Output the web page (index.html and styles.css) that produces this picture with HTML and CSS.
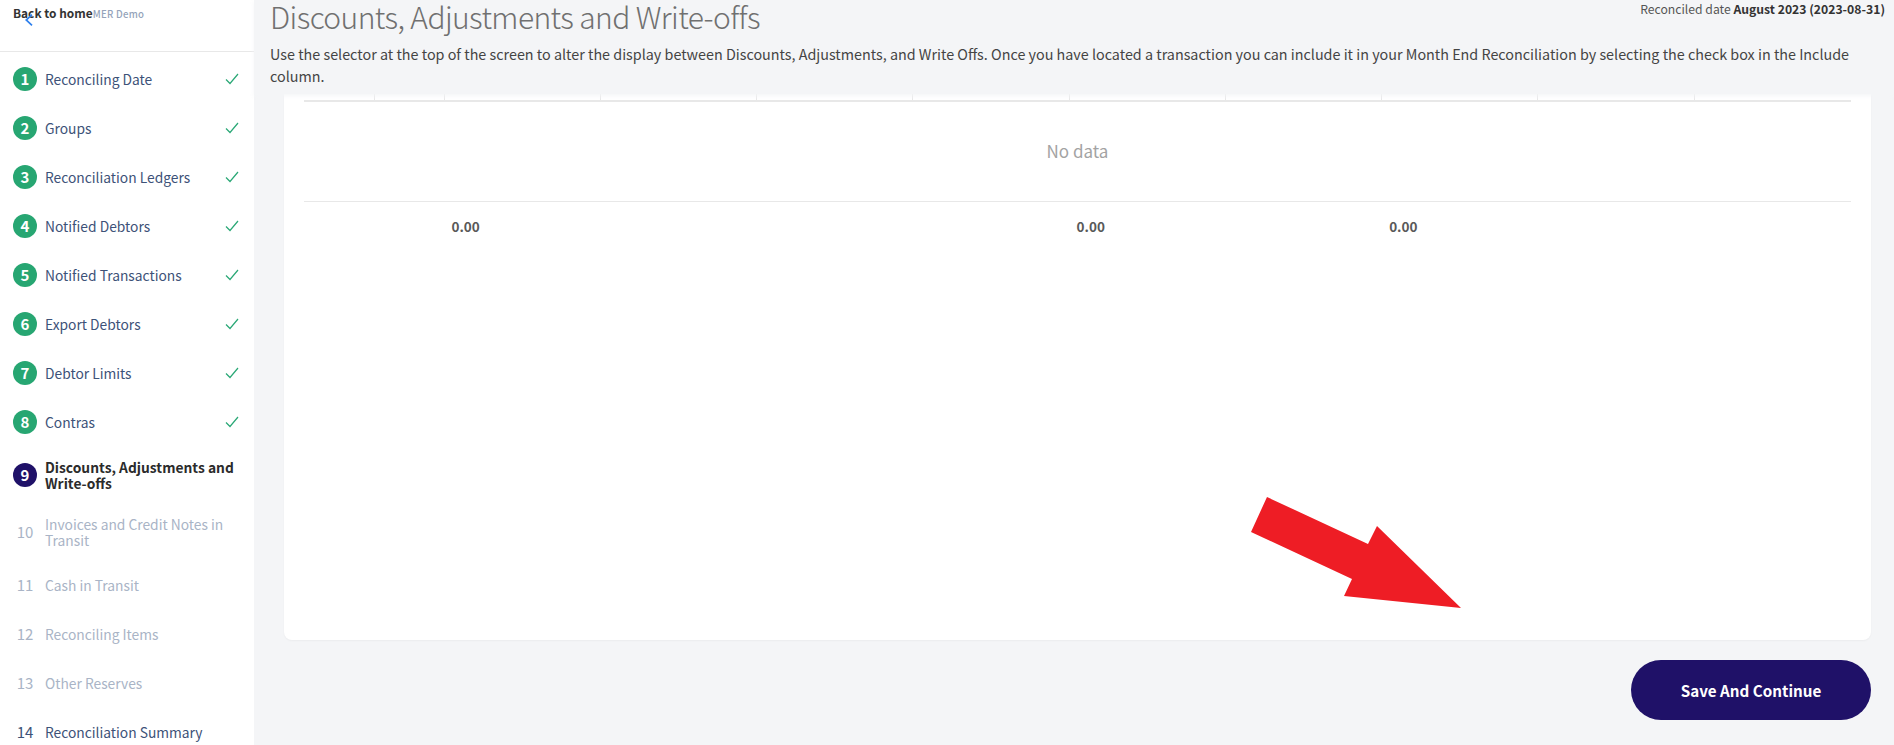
FILE: index.html
```html
<!DOCTYPE html>
<html lang="en">
<head>
  <meta charset="UTF-8">
  <title>Month End Reconciliation</title>
  <link rel="stylesheet" href="styles.css">
</head>
<body>
  <!-- Sidebar -->
  <div class="sidebar">
    <div class="sidebar-head">
      <svg class="back-icon" width="8" height="12" viewBox="0 0 8 12"><path d="M7 0.7 1.2 6 7 11.3" fill="none" stroke="#2f80ed" stroke-width="1.7"/></svg>
      <span class="back-link">Back to home</span><span class="demo-name">MER Demo</span>
    </div>
    <ul class="steps">
      <li class="step done"><span class="step-num">1</span><span class="step-label">Reconciling Date</span><svg class="step-check" width="14" height="12" viewBox="0 0 14 12"><path d="M1 6.5 5 10.5 13 1" fill="none" stroke="#2aa876" stroke-width="1.2"/></svg></li>
      <li class="step done"><span class="step-num">2</span><span class="step-label">Groups</span><svg class="step-check" width="14" height="12" viewBox="0 0 14 12"><path d="M1 6.5 5 10.5 13 1" fill="none" stroke="#2aa876" stroke-width="1.2"/></svg></li>
      <li class="step done"><span class="step-num">3</span><span class="step-label">Reconciliation Ledgers</span><svg class="step-check" width="14" height="12" viewBox="0 0 14 12"><path d="M1 6.5 5 10.5 13 1" fill="none" stroke="#2aa876" stroke-width="1.2"/></svg></li>
      <li class="step done"><span class="step-num">4</span><span class="step-label">Notified Debtors</span><svg class="step-check" width="14" height="12" viewBox="0 0 14 12"><path d="M1 6.5 5 10.5 13 1" fill="none" stroke="#2aa876" stroke-width="1.2"/></svg></li>
      <li class="step done"><span class="step-num">5</span><span class="step-label">Notified Transactions</span><svg class="step-check" width="14" height="12" viewBox="0 0 14 12"><path d="M1 6.5 5 10.5 13 1" fill="none" stroke="#2aa876" stroke-width="1.2"/></svg></li>
      <li class="step done"><span class="step-num">6</span><span class="step-label">Export Debtors</span><svg class="step-check" width="14" height="12" viewBox="0 0 14 12"><path d="M1 6.5 5 10.5 13 1" fill="none" stroke="#2aa876" stroke-width="1.2"/></svg></li>
      <li class="step done"><span class="step-num">7</span><span class="step-label">Debtor Limits</span><svg class="step-check" width="14" height="12" viewBox="0 0 14 12"><path d="M1 6.5 5 10.5 13 1" fill="none" stroke="#2aa876" stroke-width="1.2"/></svg></li>
      <li class="step done"><span class="step-num">8</span><span class="step-label">Contras</span><svg class="step-check" width="14" height="12" viewBox="0 0 14 12"><path d="M1 6.5 5 10.5 13 1" fill="none" stroke="#2aa876" stroke-width="1.2"/></svg></li>
      <li class="step current"><span class="step-num">9</span><span class="step-label">Discounts, Adjustments and Write-offs</span></li>
      <li class="step disabled"><span class="step-num">10</span><span class="step-label">Invoices and Credit Notes in Transit</span></li>
      <li class="step disabled"><span class="step-num">11</span><span class="step-label">Cash in Transit</span></li>
      <li class="step disabled"><span class="step-num">12</span><span class="step-label">Reconciling Items</span></li>
      <li class="step disabled"><span class="step-num">13</span><span class="step-label">Other Reserves</span></li>
      <li class="step"><span class="step-num">14</span><span class="step-label">Reconciliation Summary</span></li>
    </ul>
  </div>

  <!-- Main content -->
  <div class="main">
    <div class="page-head">
      <div class="title-row">
        <h1 class="page-title">Discounts, Adjustments and Write-offs</h1>
        <div class="rec-date">Reconciled date <b>August 2023 (2023-08-31)</b></div>
      </div>
      <p class="page-desc">Use the selector at the top of the screen to alter the display between Discounts, Adjustments, and Write Offs. Once you have located a transaction you can include it in your Month End Reconciliation by selecting the check box in the Include column.</p>
    </div>

    <div class="card">
      <div class="table-head">
        <span></span><span></span><span></span><span></span><span></span><span></span><span></span><span></span><span></span><span></span><span></span>
      </div>
      <div class="empty">No data</div>
      <div class="table-foot">
        <span></span><span></span><span>0.00</span><span></span><span></span><span></span><span>0.00</span><span></span><span>0.00</span><span></span><span></span>
      </div>
      <svg class="arrow" width="212" height="114" viewBox="0 0 212 114"><polygon points="17,1 118,48 127,30 211,112 94,100 102,83 1,36" fill="#ee1d25"/></svg>
    </div>

    <div class="actions">
      <button class="save-btn">Save And Continue</button>
    </div>
  </div>
</body>
</html>
```

FILE: styles.css
```css
/* Base reset */
* { margin: 0; padding: 0; box-sizing: border-box; }
body {
  display: flex; height: 745px; overflow: hidden;
  font-family: "Noto Sans CJK SC", "Noto Sans", sans-serif;
  background-color: #f4f5f7; color: #444;
}

/* Sidebar */
.sidebar { width: 254px; height: 745px; flex-shrink: 0; background-color: #fff; overflow: hidden; }
.sidebar-head {
  position: relative; height: 52px; padding: 3px 0 0 13px;
  border-bottom: 1px solid #e8e8e8; line-height: 16px;
}
.back-link { font-size: 11.9px; font-weight: 700; color: #333; }
.demo-name { font-size: 9.6px; font-weight: 500; color: #94a3ba; letter-spacing: 0.3px; }
.back-icon { position: absolute; left: 25px; top: 14px; }

.steps { list-style: none; padding-top: 2.5px; }
.step { display: flex; align-items: center; padding: 12.5px 15px 12.5px 13px; font-size: 13.8px; line-height: 16px; color: #3d5278; }
.step-num {
  width: 24px; height: 24px; flex-shrink: 0; margin-right: 8px;
  border-radius: 50%; text-align: center; line-height: 24px; font-size: 15px;
}
.step-label { flex-grow: 1; }
.step-check { flex-shrink: 0; }
.step.done .step-num { background-color: #27a672; color: #fff; font-weight: 700; }
.step.current .step-num { background-color: #1f1168; color: #fff; font-weight: 700; }
.step.current .step-label { font-weight: 700; color: #2b2b2b; }
.step.disabled { color: #a9b4c6; }

/* Page header */
.main { flex-grow: 1; min-width: 0; display: flex; flex-direction: column; }
.page-head {
  position: relative; height: 94px; padding-left: 16px; z-index: 1;
  background-color: #f4f5f7; box-shadow: 0 2px 4px rgba(244, 245, 247, 0.9);
}
.title-row { display: flex; justify-content: space-between; align-items: flex-start; height: 43px; padding-right: 9px; }
.page-title { font-size: 30px; font-weight: 300; line-height: 32px; letter-spacing: -0.6px; color: #707070; }
.rec-date { font-size: 12.2px; line-height: 18px; color: #555; }
.rec-date b { color: #333; }
.page-desc { font-size: 14.35px; line-height: 22px; width: 1590px; color: #444; }

/* Table card */
.card {
  position: relative; height: 546px; margin: 0 23px 0 30px; padding: 0 20px;
  background-color: #fff; border-radius: 0 0 8px 8px; box-shadow: 0 1px 2px rgba(0, 0, 0, 0.04);
}
.table-head, .table-foot { display: grid; grid-template-columns: 70.5px 70px repeat(9, 1fr); }
.table-head { height: 8px; border-bottom: 2px solid #e8e8e8; }
.table-head span { border-right: 1px solid #e8e8e8; }
.table-head span:last-child { border-right: none; }
.empty {
  height: 100px; border-bottom: 1px solid #e8e8e8;
  text-align: center; line-height: 97px; font-size: 17px; color: #a3a3a3;
}
.table-foot { padding-top: 15px; font-size: 13.5px; font-weight: 700; line-height: 18px; color: #595959; }
.table-foot span { padding-left: 7px; }
.arrow { position: absolute; left: 966px; top: 402px; }

/* Footer */
.actions { display: flex; justify-content: flex-end; padding: 20px 23px 0 0; }
.save-btn {
  width: 240px; height: 60px; border: none; border-radius: 30px;
  background-color: #1f1168; color: #fff; font-family: inherit; font-size: 15.2px; font-weight: 700;
}
```
